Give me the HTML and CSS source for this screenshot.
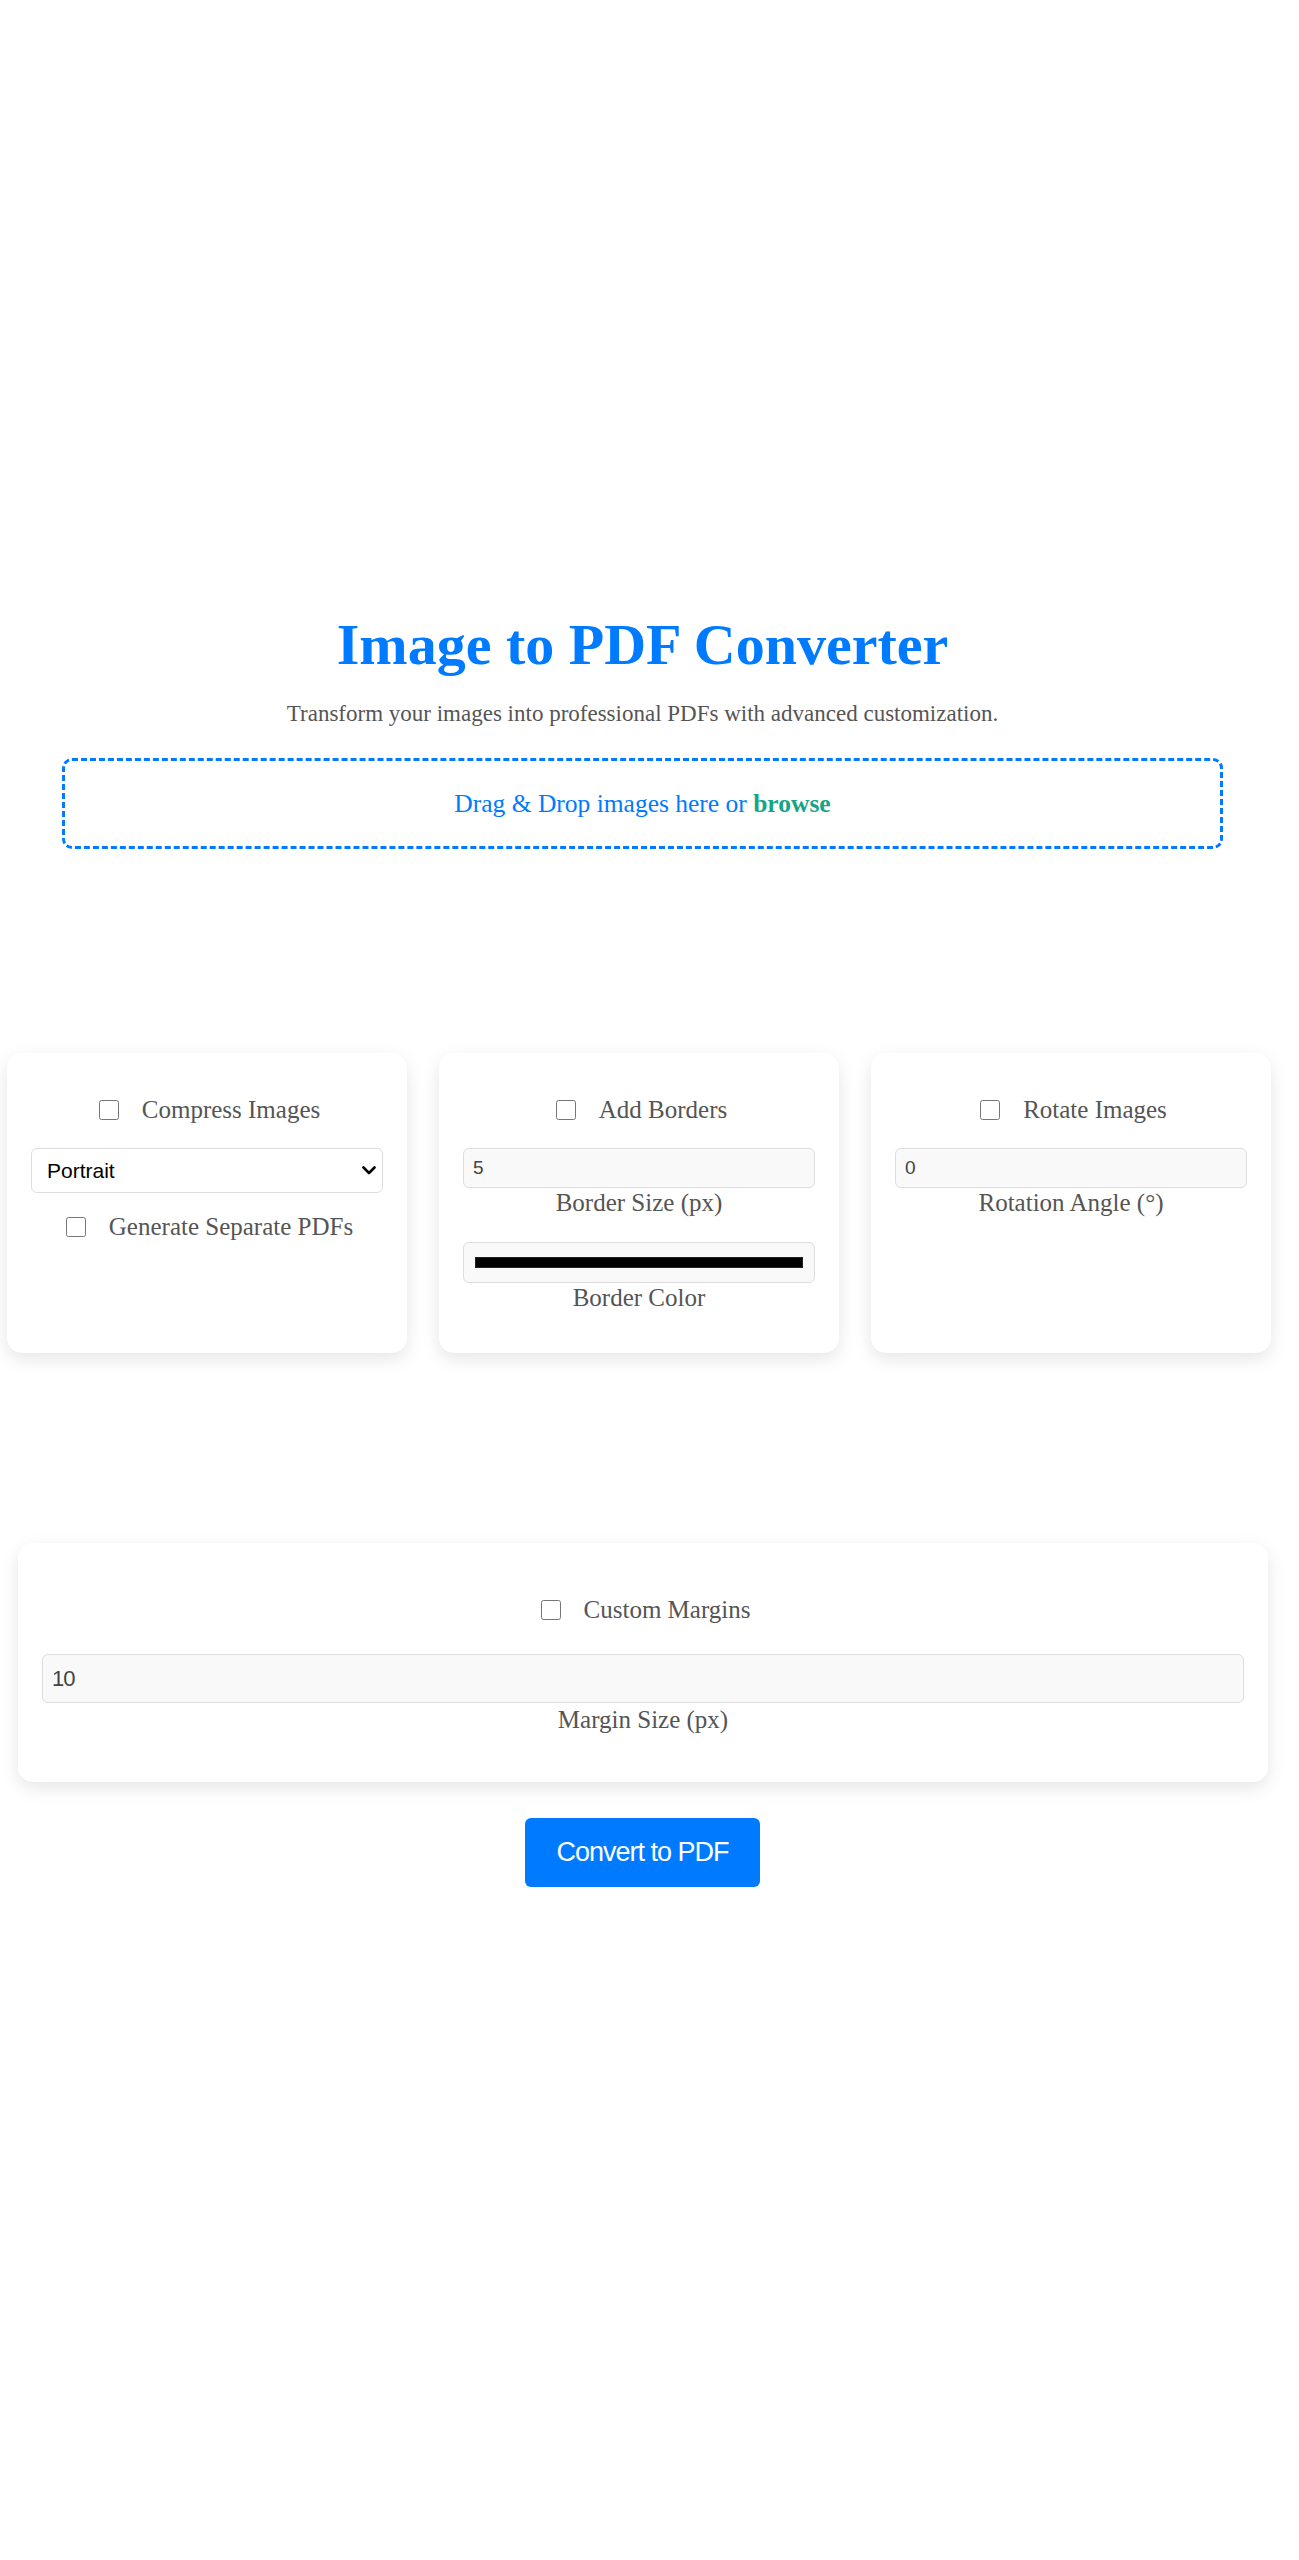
FILE: index.html
```html
<!DOCTYPE html>
<html lang="en">
<head>
<meta charset="utf-8">
<title>Image to PDF Converter</title>
<link rel="stylesheet" href="styles.css">
</head>
<body>
<div class="page">
  <header class="hero">
    <h1 class="title">Image to PDF Converter</h1>
    <p class="subtitle">Transform your images into professional PDFs with advanced customization.</p>
    <div class="dropzone">Drag &amp; Drop images here or&nbsp;<span class="browse">browse</span></div>
  </header>

  <section class="options">
    <div class="card">
      <label class="check check-top"><input type="checkbox"><span>Compress Images</span></label>
      <div class="select-wrap">
        <select class="select"><option>Portrait</option><option>Landscape</option></select>
        <svg class="chevron" width="14" height="9" viewBox="0 0 14 9" aria-hidden="true"><path d="M1.5 1.5 L7 7 L12.5 1.5" fill="none" stroke="#000" stroke-width="2.6" stroke-linecap="round" stroke-linejoin="round"/></svg>
      </div>
      <label class="check"><input type="checkbox"><span>Generate Separate PDFs</span></label>
    </div>
    <div class="card">
      <label class="check check-top"><input type="checkbox"><span>Add Borders</span></label>
      <div class="field">
        <input class="text-input" type="number" value="5">
        <span class="field-label">Border Size (px)</span>
      </div>
      <div class="field">
        <input class="color-input" type="color" value="#000000">
        <span class="field-label">Border Color</span>
      </div>
    </div>
    <div class="card">
      <label class="check check-top"><input type="checkbox"><span>Rotate Images</span></label>
      <div class="field">
        <input class="text-input" type="number" value="0">
        <span class="field-label">Rotation Angle (°)</span>
      </div>
    </div>
  </section>

  <section class="card wide-card">
    <label class="check wide-check"><input type="checkbox"><span>Custom Margins</span></label>
    <div class="field">
      <input class="text-input wide-input" type="number" value="10">
      <span class="field-label wide-label">Margin Size (px)</span>
    </div>
  </section>

  <div class="actions">
    <button class="convert" type="button">Convert to PDF</button>
  </div>
</div>
</body>
</html>
```

FILE: styles.css
```css
html, body {
  margin: 0;
  background: #ffffff;
}

body {
  font-family: "Liberation Serif", "Times New Roman", serif;
  color: #555555;
  min-height: 2560px;
}

.page {
  width: 1285px;
  padding-top: 610px;
}

.hero {
  text-align: center;
}

.title {
  margin: 0;
  font-size: 58px;
  line-height: 70px;
  font-weight: bold;
  color: #007bff;
}

.subtitle {
  margin: 20px 0 0;
  font-size: 23px;
  line-height: 28px;
  color: #555555;
}

.dropzone {
  box-sizing: border-box;
  width: 1161px;
  height: 91px;
  margin: 30px auto 0;
  border: 3px dashed #007bff;
  border-radius: 10px;
  display: flex;
  align-items: center;
  justify-content: center;
  font-size: 25.5px;
  color: #007bff;
}

.browse {
  font-weight: bold;
  color: #17a589;
}

.options {
  display: grid;
  grid-template-columns: repeat(3, 400px);
  column-gap: 32px;
  margin-top: 204px;
  padding-left: 7px;
}

.card {
  box-sizing: border-box;
  background: #ffffff;
  border-radius: 15px;
  box-shadow: 0 6px 18px rgba(0, 0, 0, 0.1);
  padding: 42px 24px 41px;
  display: flex;
  flex-direction: column;
  text-align: center;
}

.check {
  display: flex;
  align-items: center;
  justify-content: center;
  gap: 23px;
  height: 29px;
  padding-left: 5px;
  font-size: 25px;
  line-height: 29px;
  color: #555555;
}

.check input {
  width: 20px;
  height: 20px;
  margin: 0;
}

.check-top {
  margin-bottom: 24px;
}

.select-wrap {
  position: relative;
  margin: 0 0 19px;
}

.select {
  box-sizing: border-box;
  display: block;
  width: 100%;
  height: 45px;
  margin: 0;
  padding: 0 30px 0 15px;
  border: 1px solid #dddddd;
  border-radius: 6px;
  background: #ffffff;
  -webkit-appearance: none;
  appearance: none;
  font-family: "Liberation Sans", Arial, sans-serif;
  font-size: 21px;
  color: #000000;
}

.chevron {
  position: absolute;
  right: 7px;
  top: 18px;
  pointer-events: none;
}

.field {
  display: flex;
  flex-direction: column;
}

.field + .field {
  margin-top: 25px;
}

.text-input {
  box-sizing: border-box;
  width: 100%;
  height: 40px;
  margin: 0;
  padding: 0 9px;
  border: 1px solid #dddddd;
  border-radius: 6px;
  background: #f9f9f9;
  font-family: "Liberation Sans", Arial, sans-serif;
  font-size: 19px;
  letter-spacing: -0.5px;
  color: #444444;
}

.color-input {
  box-sizing: border-box;
  width: 100%;
  height: 41px;
  margin: 0;
  padding: 0;
  border: 1px solid #dddddd;
  border-radius: 6px;
  background: #f9f9f9;
  cursor: pointer;
}

.color-input::-webkit-color-swatch-wrapper {
  padding: 14px 11px;
}

.color-input::-webkit-color-swatch {
  border: 1px solid #222222;
  border-radius: 0;
}

.field-label {
  font-size: 25px;
  line-height: 29px;
  color: #555555;
}

.wide-card {
  width: 1250px;
  margin: 190px 0 0 18px;
  padding: 52px 24px 48px;
}

.wide-check {
  margin-bottom: 30px;
}

.wide-input {
  height: 49px;
  font-size: 22px;
  letter-spacing: -1px;
}

.wide-label {
  margin-top: 2px;
}

.actions {
  margin-top: 36px;
  text-align: center;
}

.convert {
  height: 69px;
  padding: 0 31px;
  border: none;
  border-radius: 6px;
  background: #007bff;
  color: #ffffff;
  font-family: "Liberation Sans", Arial, sans-serif;
  font-size: 27px;
  letter-spacing: -1px;
  cursor: pointer;
}
```
